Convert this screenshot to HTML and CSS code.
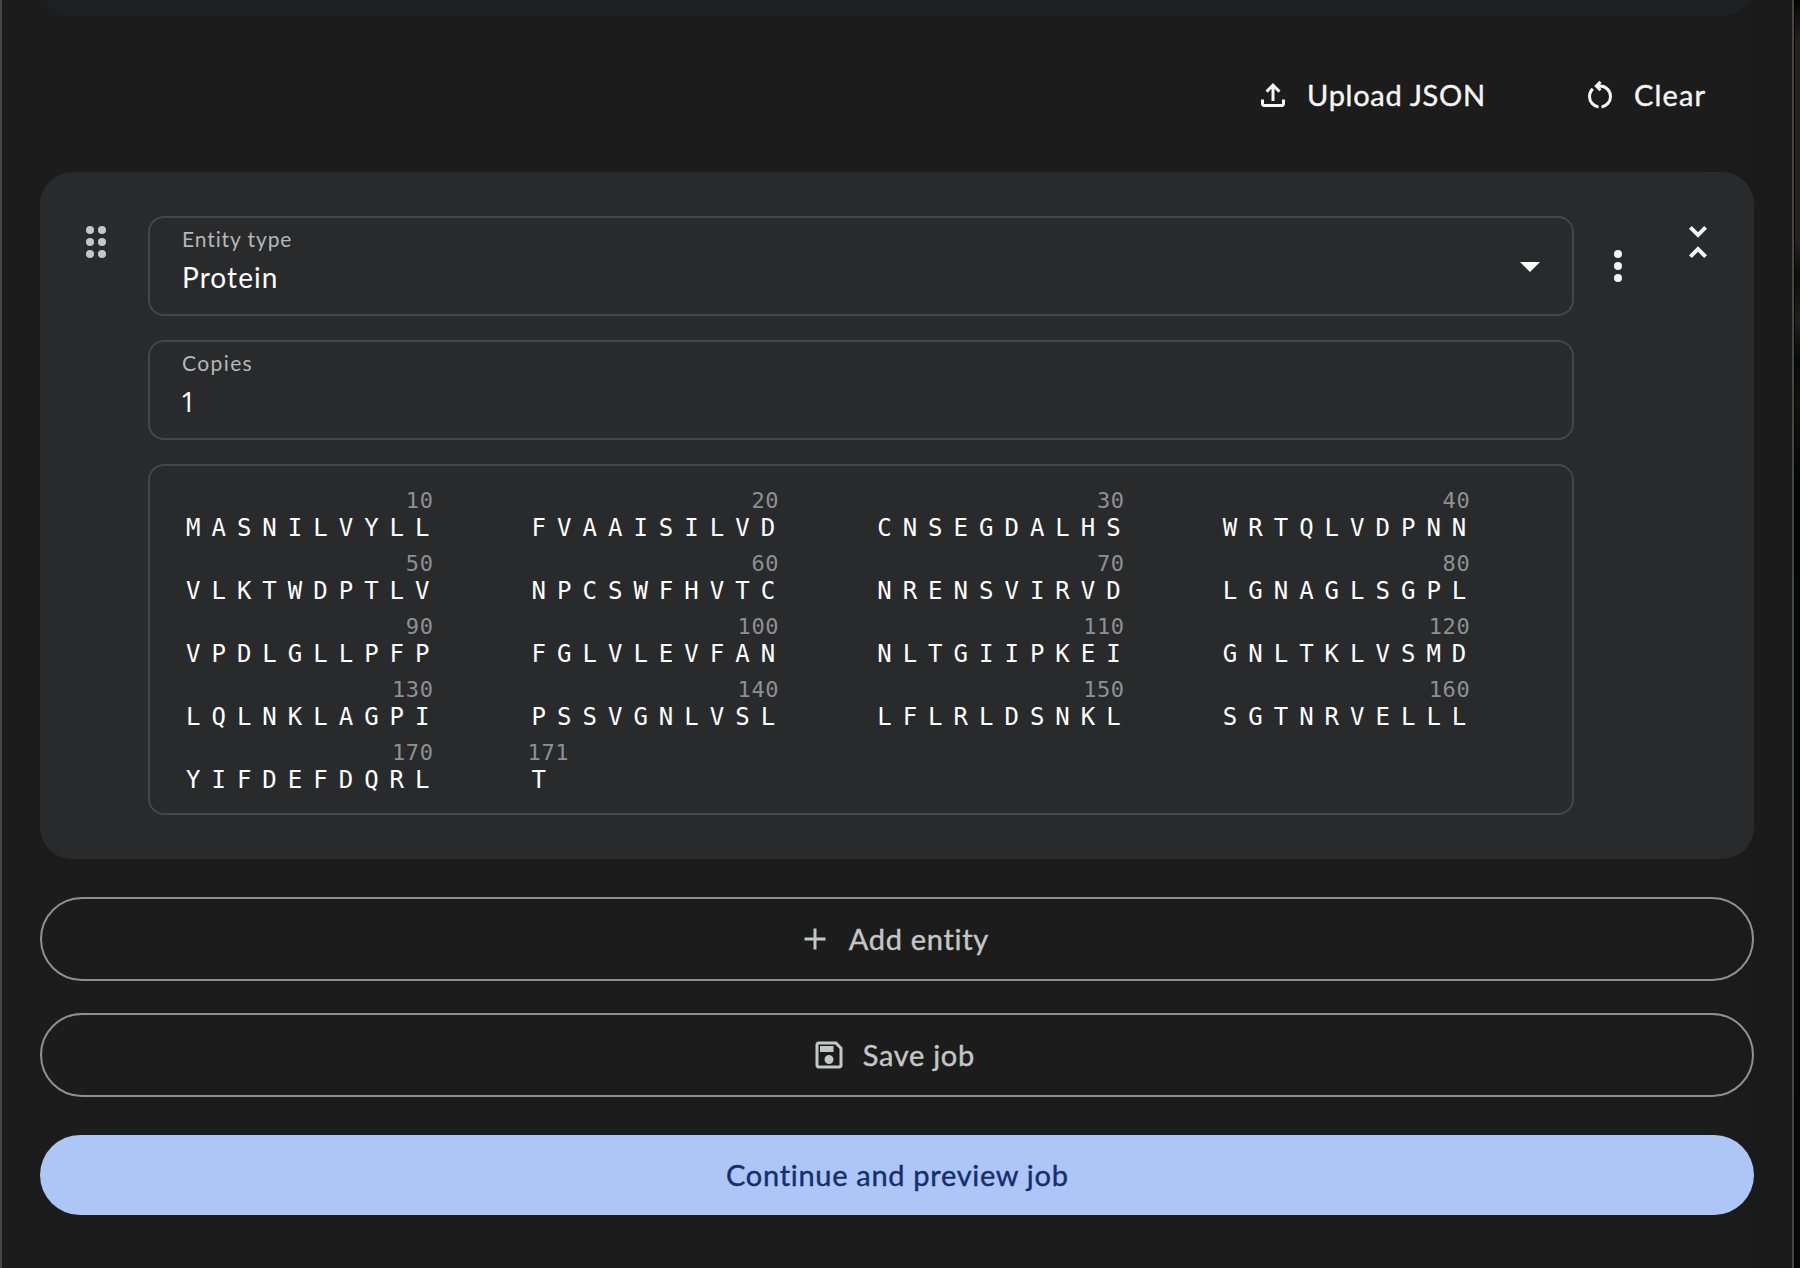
FILE: index.html
```html
<!DOCTYPE html>
<html lang="en">
<head>
<meta charset="utf-8">
<title>Job editor</title>
<link rel="stylesheet" href="styles.css">
</head>
<body>
<main class="panel">
  <div class="previous-card"></div>
  <div class="toolbar">
    <button class="text-button upload"><svg class="icon" viewBox="0 -960 960 960"><path d="M440-320v-326L336-542l-56-58 200-200 200 200-56 58-104-104v326h-80ZM240-160q-33 0-56.5-23.5T160-240v-120h80v120h480v-120h80v120q0 33-23.5 56.5T720-160H240Z"/></svg><span>Upload JSON</span></button>
    <button class="text-button clear"><svg class="icon" viewBox="0 -960 960 960"><path d="M440-122q-121-15-200.5-105.5T160-440q0-66 26-126.5T260-672l57 57q-38 34-57.5 79T240-440q0 88 56 155.5T440-202v80Zm80 0v-80q87-16 143.5-83T720-440q0-100-70-170t-170-70h-3l44 44-56 56-140-140 140-140 56 56-44 44h3q134 0 227 93t93 227q0 121-79.5 211.5T520-122Z"/></svg><span>Clear</span></button>
  </div>
  <section class="entity">
    <svg class="icon-large drag" viewBox="0 0 48 48"><circle cx="18" cy="12" r="4"/><circle cx="30" cy="12" r="4"/><circle cx="18" cy="24" r="4"/><circle cx="30" cy="24" r="4"/><circle cx="18" cy="36" r="4"/><circle cx="30" cy="36" r="4"/></svg>
    <div class="fields">
      <div class="field">
        <div class="field-text"><label class="label type-label">Entity type</label><div class="value protein">Protein</div></div>
        <svg class="arrow" viewBox="0 0 20 10"><path d="M0 0h20L10 10z"/></svg>
      </div>
      <div class="field">
        <div class="field-text"><label class="label copies-label">Copies</label><div class="value number">1</div></div>
      </div>
      <div class="sequence">
        <div class="block"><span class="index">10</span><span class="residues">MASNILVYLL</span></div>
        <div class="block"><span class="index">20</span><span class="residues">FVAAISILVD</span></div>
        <div class="block"><span class="index">30</span><span class="residues">CNSEGDALHS</span></div>
        <div class="block"><span class="index">40</span><span class="residues">WRTQLVDPNN</span></div>
        <div class="block"><span class="index">50</span><span class="residues">VLKTWDPTLV</span></div>
        <div class="block"><span class="index">60</span><span class="residues">NPCSWFHVTC</span></div>
        <div class="block"><span class="index">70</span><span class="residues">NRENSVIRVD</span></div>
        <div class="block"><span class="index">80</span><span class="residues">LGNAGLSGPL</span></div>
        <div class="block"><span class="index">90</span><span class="residues">VPDLGLLPFP</span></div>
        <div class="block"><span class="index">100</span><span class="residues">FGLVLEVFAN</span></div>
        <div class="block"><span class="index">110</span><span class="residues">NLTGIIPKEI</span></div>
        <div class="block"><span class="index">120</span><span class="residues">GNLTKLVSMD</span></div>
        <div class="block"><span class="index">130</span><span class="residues">LQLNKLAGPI</span></div>
        <div class="block"><span class="index">140</span><span class="residues">PSSVGNLVSL</span></div>
        <div class="block"><span class="index">150</span><span class="residues">LFLRLDSNKL</span></div>
        <div class="block"><span class="index">160</span><span class="residues">SGTNRVELLL</span></div>
        <div class="block"><span class="index">170</span><span class="residues">YIFDEFDQRL</span></div>
        <div class="block partial"><span class="index">171</span><span class="residues">T</span></div>
      </div>
    </div>
    <svg class="icon-large more" viewBox="0 0 48 48"><circle cx="24" cy="12" r="4"/><circle cx="24" cy="24" r="4"/><circle cx="24" cy="36" r="4"/></svg>
    <svg class="icon-large collapse" viewBox="0 -960 960 960"><path d="m356-160-56-56 180-180 180 180-56 56-124-124-124 124Zm124-404L300-744l56-56 124 124 124-124 56 56-180 180Z"/></svg>
  </section>
  <button class="pill add"><svg class="icon" viewBox="0 -960 960 960"><path d="M440-440H200v-80h240v-240h80v240h240v80H520v240h-80v-240Z"/></svg><span>Add entity</span></button>
  <button class="pill save"><svg class="icon" viewBox="0 -960 960 960"><path d="M840-680v480q0 33-23.5 56.5T760-120H200q-33 0-56.5-23.5T120-200v-560q0-33 23.5-56.5T200-840h480l160 160Zm-80 34L646-760H200v560h560v-446ZM480-240q50 0 85-35t35-85q0-50-35-85t-85-35q-50 0-85 35t-35 85q0 50 35 85t85 35ZM240-560h360v-160H240v160Z"/></svg><span>Save job</span></button>
  <button class="pill continue"><span>Continue and preview job</span></button>
</main>
<aside class="backdrop"></aside>
</body>
</html>
```

FILE: styles.css
```css
* { box-sizing: border-box; }

body {
  margin: 0;
  width: 1800px;
  height: 1268px;
  overflow: hidden;
  display: flex;
  background: #080909;
  color: #fff;
  font-family: Lato, sans-serif;
}

svg { display: block; flex: none; fill: currentColor; }

.panel {
  width: 1794px;
  height: 1268px;
  padding: 0 38px;
  border: solid #464646;
  border-width: 0 2px;
  background: linear-gradient(90deg, #1c1c1c 1700px, #191919 1794px);
  display: flex;
  flex-direction: column;
}

.backdrop {
  flex: 1;
  border-left: 1px solid #050505;
  background: linear-gradient(#050505 0, #24221d 40px, #24221d 240px, #0c0d0c 275px, #20201c 320px, #080909 360px, #11120f 400px, #050606 480px, #070807 100%);
}

/* Scrolled mostly out of view; only its lower edge shows. */
.previous-card {
  flex: none;
  height: 80px;
  margin-top: -64px;
  border-radius: 32px;
  background: #1e2022;
}

.toolbar {
  flex: none;
  height: 156px;
  padding: 2px 49px 0 0;
  display: flex;
  align-items: center;
  justify-content: flex-end;
  gap: 97px;
}

button {
  margin: 0;
  padding: 0;
  border: 0;
  background: none;
  font: 29px/40px Lato, sans-serif;
  font-variant-ligatures: none;
  -webkit-text-stroke: 0.4px currentColor;
}

button span { margin-right: -0.7px; letter-spacing: 0.7px; white-space: nowrap; }
.clear span { margin-right: -1.1px; letter-spacing: 1.1px; }

.text-button {
  display: flex;
  align-items: center;
  gap: 16px;
  color: #f5f5f5;
}

.icon { width: 36px; height: 36px; -webkit-text-stroke: 0; }
.icon-large { width: 48px; height: 48px; }

.entity {
  flex: none;
  height: 687px;
  padding: 44px 32px 0;
  border-radius: 32px;
  background: #292a2c;
  display: flex;
  align-items: flex-start;
}

.drag { margin-top: 2px; color: #c4c7c5; }
.more { margin: 26px 0 0 20px; color: #f5f5f5; }
.collapse { margin: 2px 0 0 32px; color: #f5f5f5; }

.fields {
  width: 1426px;
  margin-left: 28px;
  display: flex;
  flex-direction: column;
  gap: 24px;
}

.field {
  height: 100px;
  padding: 0 32px;
  border: 2px solid #444746;
  border-radius: 16px;
  display: flex;
  align-items: center;
  justify-content: space-between;
}

.field-text { display: flex; flex-direction: column; padding-bottom: 10px; }
.label { font-size: 21px; line-height: 32px; color: #b5b7b6; letter-spacing: 0.9px; }
.copies-label { letter-spacing: 1.4px; }
.value { font-size: 28px; line-height: 44px; letter-spacing: 1.1px; }
.number { margin-left: -2px; font-family: "Open Sans", sans-serif; }
.arrow { width: 20px; height: 10px; margin-top: 2px; }

.sequence {
  height: 351px;
  padding: 22px 0 0 36px;
  border: 2px solid #444746;
  border-radius: 16px;
  display: grid;
  grid-template-columns: repeat(4, 254.5px);
  grid-auto-rows: 63px;
  column-gap: 91.1px;
  align-content: start;
  font-family: "DejaVu Sans Mono", monospace;
}

.block { display: flex; flex-direction: column; }
.index { height: 26px; padding-right: 7px; font-size: 22px; line-height: 26px; letter-spacing: 0.6px; text-align: right; color: #8e9092; }
.residues { font-size: 24px; line-height: 28px; letter-spacing: 11px; white-space: nowrap; }
.partial .index { margin-left: -4px; text-align: left; }

.pill {
  flex: none;
  height: 84px;
  border: 2px solid #8e918f;
  border-radius: 42px;
  display: flex;
  align-items: center;
  justify-content: center;
  gap: 16px;
  color: #c4c7c5;
}

.add { margin-top: 38px; padding-right: 9px; }
.save { margin-top: 32px; padding-right: 9px; }

.continue {
  height: 80px;
  margin-top: 38px;
  border: 0;
  background: #aec6f6;
  color: #152e6e;
}
```
